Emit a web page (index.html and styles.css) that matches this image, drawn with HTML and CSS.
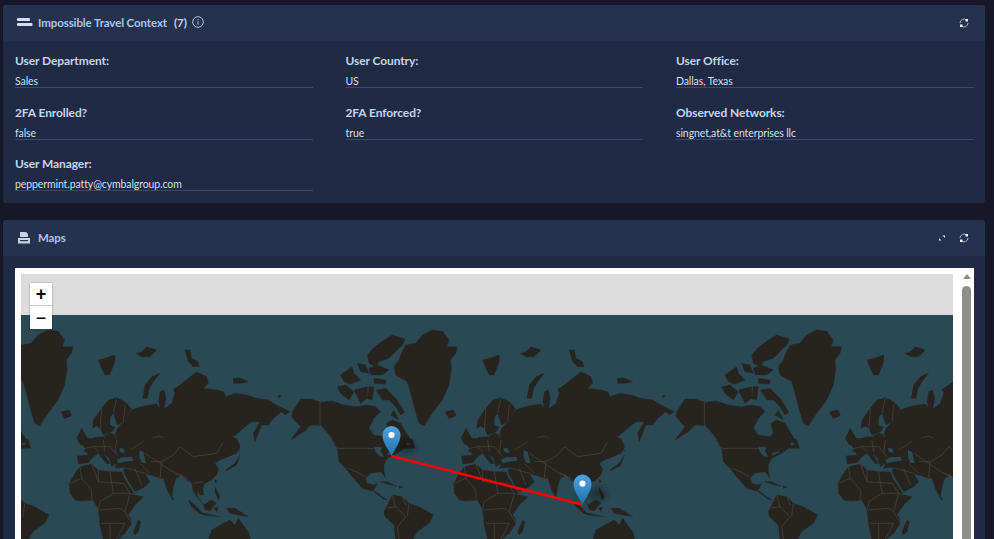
FILE: index.html
```html
<!DOCTYPE html>
<html lang="en">
<head>
  <meta charset="UTF-8" />
  <title>Impossible Travel Context</title>
  <link rel="stylesheet" href="styles.css">
</head>
<body>
  <section class="panel context-panel">
    <header class="panel-head">
      <svg class="head-icon" viewBox="0 0 16 9"><rect x="0" y="0" width="13" height="3" rx="1"/><rect x="0" y="5" width="15.5" height="3" rx="1"/></svg>
      <span class="panel-title">Impossible Travel Context</span>
      <span class="panel-count">(7)</span>
      <svg class="info-icon" viewBox="0 0 12 12"><circle cx="6" cy="6" r="5.300"/><path d="M6 5.2v3.6M6 3v1.2"/></svg>
      <span class="head-actions">
        <svg class="tool-icon" viewBox="0 0 10 10"><path d="M1 5a4 4 0 0 1 6.5-3M9 5a4 4 0 0 1-6.500 3"/><rect class="tip" x="6.500" y="1" width="2.500" height="2.500"/><rect class="tip" x="1" y="6.500" width="2.500" height="2.500"/></svg>
      </span>
    </header>
    <div class="fields">
      <div class="field"><div class="field-label">User Department:</div><div class="field-value">Sales</div></div>
      <div class="field"><div class="field-label">User Country:</div><div class="field-value">US</div></div>
      <div class="field"><div class="field-label">User Office:</div><div class="field-value">Dallas, Texas</div></div>
      <div class="field"><div class="field-label">2FA Enrolled?</div><div class="field-value">false</div></div>
      <div class="field"><div class="field-label">2FA Enforced?</div><div class="field-value">true</div></div>
      <div class="field"><div class="field-label">Observed Networks:</div><div class="field-value">singnet,at&amp;t enterprises llc</div></div>
      <div class="field"><div class="field-label">User Manager:</div><div class="field-value">peppermint.patty@cymbalgroup.com</div></div>
    </div>
  </section>

  <section class="panel maps-panel">
    <header class="panel-head">
      <svg class="maps-icon" viewBox="0 0 12 12"><path d="M2 0h6l2 2v3H2z"/><path d="M0 6h12v5.500H0z"/><rect class="slot" x="2" y="8" width="8" height="1.200"/></svg>
      <span class="panel-title">Maps</span>
      <span class="head-actions">
        <svg class="tool-icon" viewBox="0 0 10 10"><path class="tip" d="M5.500 2.500H8v2.500zM4.500 7.500H2V5z"/></svg>
        <svg class="tool-icon" viewBox="0 0 10 10"><path d="M1 5a4 4 0 0 1 6.500-3M9 5a4 4 0 0 1-6.500 3"/><rect class="tip" x="6.500" y="1" width="2.500" height="2.500"/><rect class="tip" x="1" y="6.500" width="2.500" height="2.500"/></svg>
      </span>
    </header>
    <div class="maps-body">
      <div class="map-frame">
        <div class="map-view">
          <div class="map-band"></div>
          <svg class="world-map" viewBox="21 315 932 224">
            <defs>
              <g id="world">
                <!-- north eurasia -->
                <g transform="translate(60 330) scale(.33333)">
                  <path class="land" d="M190,275 L200,265 L213,240 L250,228 L290,222 L300,235 L296,215 L300,185 L312,180 L318,205 L312,238 L335,220 L345,190 L340,178 L360,165 L385,145 L410,125 L440,140 L445,160 L430,175 L470,180 L490,185 L498,200 L525,190 L560,195 L590,205 L625,210 L650,225 L690,245 L675,255 L665,245 L640,265 L625,285 L605,285 L585,335 L580,310 L600,275 L575,275 L550,295 L520,320 L540,345 L530,365 L70,365 L105,322 L130,320 L150,308 L165,315 L172,295Z"/>
                  <path class="land" d="M97,295 L100,270 L125,235 L145,210 L170,203 L195,215 L213,235 L200,265 L190,275 L172,285 L165,265 L160,250 L150,262 L150,285 L165,292 L155,305 L130,315 L122,298 L110,288Z"/>
                  <path class="land" d="M50,325 L65,295 L80,320 L87,340 L62,345Z M3,245 L25,240 L35,255 L15,265Z M115,90 L135,85 L165,75 L165,95 L155,120 L150,135 L135,135 L125,115Z M228,70 L245,65 L260,50 L290,60 L270,80 L245,80Z M375,60 L390,60 L395,85 L415,95 L418,110 L400,110 L385,95Z M248,205 L255,165 L275,140 L300,130 L280,155 L268,175 L262,205Z M520,145 L540,143 L565,155 L545,160 L520,160Z M655,195 L665,198 L655,203Z"/>
                  <path class="border" d="M228,355 L240,335 L300,318 L340,340 L360,345 L420,340 L470,325 L510,345 L520,365 M165,315 L175,345 L210,355 M125,235 L120,300 M170,205 L160,250 M195,225 L190,275 M100,335 L170,335 M135,320 L130,365"/>
                </g>
                <!-- south eurasia and africa -->
                <g transform="translate(60 440) scale(.33333)">
                  <path class="land" d="M70,-5 L530,-5 L540,20 L530,40 L505,50 L480,60 L465,70 L475,85 L470,105 L455,120 L435,130 L428,145 L432,165 L420,165 L412,150 L412,168 L430,195 L400,155 L395,130 L380,120 L365,105 L348,115 L340,140 L335,175 L322,150 L310,115 L300,115 L270,105 L255,100 L270,125 L255,140 L225,155 L212,135 L195,105 L190,90 L200,82 L165,85 L170,70 L155,80 L148,55 L130,40 L150,70 L140,72 L115,40 L100,50 L85,68 L55,72 L52,48 L85,45 L75,25 L65,10Z"/>
                  <path class="land" d="M28,130 L45,100 L60,80 L95,72 L115,90 L150,95 L185,95 L190,110 L225,165 L250,170 L225,195 L205,225 L212,235 L215,250 L195,280 L170,300 L130,300 L120,255 L115,210 L100,180 L65,183 L45,180 L30,160Z"/>
                  <path class="land" d="M220,275 L235,240 L242,245 L235,275 L225,285Z M385,180 L405,195 L430,222 L420,222 L395,200Z M425,218 L480,230 L430,225Z M430,195 L455,180 L470,190 L450,212 L435,210Z M462,205 L475,200 L470,215Z M465,140 L480,170 L475,180 L465,155Z M500,205 L525,205 L565,230 L535,225 L510,220Z M445,300 L455,270 L490,250 L510,240 L525,255 L535,235 L565,275 L572,300Z M497,90 L525,70 L540,45 L530,75 L500,92Z M530,5 L540,35 L530,15Z M465,118 L471,125 L465,128Z M337,172 L342,178 L337,180Z"/>
                  <path class="sea" d="M170,60 L185,52 L215,50 L220,62 L195,65 L175,70Z M238,30 L250,35 L258,70 L245,68 L238,50Z M178,25 L190,25 L195,40 L180,35Z"/>
                  <path class="border" d="M60,80 L65,115 L30,130 M95,72 L115,125 L115,90 M115,125 L190,130 M150,95 L160,160 L120,185 L115,210 M65,115 L95,150 L95,180 M160,160 L210,160 L225,165 M190,130 L210,160 L195,215 L215,250 M120,210 L180,205 L195,215 M125,250 L195,250 L170,297 M150,250 L150,297 M200,85 L255,100 M240,70 L270,100 M270,65 L305,65 L300,115 M255,40 L300,70 L345,100 L365,105 M305,65 L340,45 L360,20 L400,50 L470,40 L490,5 M345,100 L380,115 L395,130 M400,130 L430,125 M115,35 L100,20 L150,20 L175,50 M130,0 L135,35 M170,0 L165,40 M210,30 L250,5 M75,25 L100,20 M225,85 L245,135"/>
                </g>
                <!-- canada and greenland -->
                <g transform="translate(285.67 325) scale(.33333)">
                  <path class="land" d="M325,125 L340,105 L345,90 L360,60 L390,55 L410,30 L440,15 L470,18 L490,45 L483,65 L515,65 L510,85 L495,105 L497,135 L490,180 L470,225 L440,265 L415,303 L400,295 L388,255 L378,215 L365,170 L330,150Z"/>
                  <path class="land" d="M262,70 L295,45 L320,30 L358,42 L350,60 L325,85 L310,100 L280,110 L270,125 L250,115 L245,90Z M165,150 L200,125 L205,145 L225,165 L195,178 L175,170Z M215,115 L240,120 L250,145 L225,140Z M250,130 L275,120 L310,135 L290,150 L255,150Z M155,185 L180,180 L205,200 L190,225 L165,205Z M205,195 L245,185 L245,220 L225,235Z M265,160 L300,165 L300,178 L265,175Z M250,185 L265,185 L260,225 L245,222Z M270,195 L300,190 L330,220 L357,262 L345,270 L330,245 L310,225 L290,225 L285,215Z M325,255 L340,285 L315,270Z M480,265 L505,258 L510,272 L490,280Z"/>
                  <path class="land" d="M20,260 L45,222 L75,222 L105,232 L140,228 L175,240 L215,245 L245,240 L270,245 L285,260 L265,280 L250,310 L265,330 L300,335 L310,325 L303,295 L320,285 L345,295 L375,345 L375,365 L150,365 L130,330 L105,302 L75,300 L55,320 L15,345 L45,305 L30,290 L18,275Z"/>
                  <path class="border" d="M103,230 L103,300 L130,330 L150,360"/>
                </g>
                <!-- usa, mexico and south america -->
                <g transform="translate(315.67 440) scale(.33333)">
                  <path class="land" d="M55,-2 L290,-2 L298,25 L265,25 L245,40 L215,55 L205,75 L205,95 L210,115 L200,100 L195,95 L165,100 L150,115 L155,130 L175,135 L185,130 L175,150 L200,170 L215,180 L205,178 L175,155 L140,145 L110,110 L90,85 L70,65 L65,25Z"/>
                  <path class="land" d="M205,215 L230,165 L260,170 L280,190 L310,200 L353,225 L340,250 L305,275 L290,300 L240,300 L235,255 L208,230Z"/>
                  <path class="land" d="M195,125 L215,125 L245,140 L215,132Z M250,138 L262,142 L250,145Z"/>
                  <path class="sea" d="M175,20 L200,22 L195,32 L205,50 L190,48 L180,35Z M215,40 L240,32 L235,38 L218,46Z M270,8 L285,10 L275,18Z"/>
                  <path class="border" d="M65,25 L180,25 M95,85 L120,95 L150,110 M170,150 L185,155 M230,165 L240,200 L210,205 M240,200 L270,230 L245,260 L250,297 M280,190 L275,230 M262,172 L270,195"/>
                </g>
              </g>
              <radialGradient id="pin-shadow"><stop offset="0" stop-color="#000" stop-opacity=".35"/><stop offset="1" stop-color="#000" stop-opacity="0"/></radialGradient>
              <linearGradient id="pin-fill" x1="0" y1="0" x2="0" y2="1"><stop offset="0" stop-color="#4da4df"/><stop offset="1" stop-color="#2270b0"/></linearGradient>
              <g id="pin">
                <path fill="url(#pin-fill)" d="M0,0 C-3,-7 -9,-13 -9,-21 A9,9 0 0 1 9,-21 C9,-13 3,-7 0,0Z"/>
                <circle cx="0" cy="-21" r="3.100" fill="#fff"/>
              </g>
            </defs>
            <rect x="21" y="315" width="932" height="224" class="water"/>
            <use href="#world" x="-384.33"/>
            <use href="#world" x="0"/>
            <use href="#world" x="384.33"/>
            <use href="#world" x="768.67"/>
            <ellipse cx="597" cy="494" rx="15" ry="11" fill="url(#pin-shadow)"/>
            <ellipse cx="406" cy="446" rx="15" ry="11" fill="url(#pin-shadow)"/>
            <line x1="391.500" y1="456" x2="582" y2="504.500" stroke="#f00" stroke-width="2.500"/>
            <use href="#pin" x="391.500" y="456"/>
            <use href="#pin" x="582.500" y="504.500"/>
          </svg>
          <div class="zoom-control">
            <button class="zoom-btn">+</button>
            <button class="zoom-btn zoom-out">&minus;</button>
          </div>
        </div>
        <div class="map-scroll">
          <span class="scroll-arrow"></span>
          <span class="scroll-thumb"></span>
        </div>
      </div>
    </div>
  </section>
</body>
</html>
```

FILE: styles.css
```css
html, body {
  height: 539px;
  overflow: hidden;
}
body {
  background-color: #17172a;
  color: #d5dff0;
  font-family: Lato, "Noto Sans", sans-serif;
  font-size: 10.5px;
  letter-spacing: -0.1px;
  margin: 0;
  padding: 5px 9px 0 3px;
  box-sizing: border-box;
}
.panel {
  background: #1f2a44;
  border-radius: 3px;
}
.context-panel {
  height: 198px;
  margin-bottom: 17px;
}
.panel-head {
  display: flex;
  align-items: center;
  height: 36px;
  padding: 0 16px 1px 14px;
  box-sizing: border-box;
  background: #24324f;
  border-radius: 3px 3px 0 0;
}
.head-icon {
  width: 16px;
  height: 9px;
  margin: 0 5px 1px 0;
  fill: #d5dff0;
}
.panel-title {
  color: #a9c4ea;
  font-size: 11.5px;
  font-weight: 700;
}
.panel-count {
  color: #c3d4f0;
  font-size: 11.5px;
  font-weight: 700;
  margin-left: 7px;
}
.info-icon {
  width: 12px;
  height: 12px;
  margin: 0 0 1px 5px;
  fill: none;
  stroke: #c3d4f0;
  stroke-width: 0.9;
}
.head-actions {
  display: flex;
  gap: 12px;
  margin-left: auto;
}
.tool-icon {
  width: 10px;
  height: 10px;
  fill: none;
  stroke: #aab6c8;
  stroke-width: 1;
}
.tool-icon .tip {
  fill: #eef2f8;
  stroke: none;
}
.maps-icon {
  width: 12px;
  height: 12px;
  margin: 0 8px 0 1px;
  fill: #c8d4e6;
}
.maps-icon .slot {
  fill: #24324f;
}
.fields {
  display: grid;
  grid-template-columns: repeat(3, 297.5px);
  column-gap: 33px;
  padding: 11px 12px 0;
}
.field {
  height: 51.5px;
}
.field-label {
  color: #c3d4f0;
  font-size: 12px;
  font-weight: 700;
  line-height: 18px;
}
.field-value {
  margin-top: 2px;
  height: 15px;
  line-height: 18px;
  border-bottom: 1px solid #3a4a6b;
}
.maps-body {
  padding: 12px 11px 0 12px;
}
.map-frame {
  display: flex;
  height: 400px;
  border: 6px solid #fff;
  border-right: 0;
  background: #fff;
}
.map-view {
  position: relative;
  width: 932px;
  flex: none;
}
.map-band {
  height: 41px;
  background: #dcdcdc;
}
.world-map {
  display: block;
  width: 932px;
  height: 224px;
}
.water {
  fill: #2a4955;
}
.land {
  fill: #27241f;
  stroke: #27241f;
  stroke-width: 1;
  stroke-linejoin: round;
}
.sea {
  fill: #2a4955;
}
.border {
  fill: none;
  stroke: #544848;
  stroke-width: 1.800;
}
.zoom-control {
  position: absolute;
  top: 9px;
  left: 9px;
  display: flex;
  flex-direction: column;
  width: 22px;
  border-radius: 2px;
  box-shadow: 0 0 2px rgba(0, 0, 0, 0.4);
}
.zoom-btn {
  width: 22px;
  height: 23px;
  padding: 0;
  border: 0;
  border-bottom: 1px solid #ccc;
  background: #fff;
  color: #000;
  font-family: "Liberation Sans", sans-serif;
  font-size: 18px;
  font-weight: 700;
  line-height: 22px;
}
.zoom-out {
  border-bottom: 0;
  font-weight: 400;
}
.map-scroll {
  position: relative;
  flex: 1;
  display: flex;
  flex-direction: column;
  align-items: flex-end;
  padding: 0 3px 0 0;
}
.scroll-arrow {
  width: 0;
  height: 0;
  border-left: 4.500px solid transparent;
  border-right: 4.500px solid transparent;
  border-bottom: 5px solid #8e8e8e;
}
.scroll-thumb {
  width: 9px;
  height: 300px;
  margin-top: 7px;
  background: #8e8e8e;
  border-radius: 4.500px 4.500px 0 0;
}
```
